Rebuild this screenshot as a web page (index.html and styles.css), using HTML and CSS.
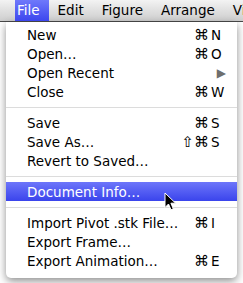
FILE: index.html
```html
<!DOCTYPE html>
<html lang="en">
<head>
  <meta charset="UTF-8">
  <title>File Menu</title>
  <link rel="stylesheet" href="styles.css">
</head>
<body>

  <div class="menubar">
    <span class="judul aktif">File</span>
    <span class="judul">Edit</span>
    <span class="judul">Figure</span>
    <span class="judul">Arrange</span>
    <span class="judul">View</span>
  </div>

  <div class="menu">
    <div class="item"><span class="label">New</span><span class="mods">⌘</span><span class="key">N</span></div>
    <div class="item"><span class="label">Open…</span><span class="mods">⌘</span><span class="key">O</span></div>
    <div class="item"><span class="label">Open Recent</span><span class="panah">▶</span></div>
    <div class="item"><span class="label">Close</span><span class="mods">⌘</span><span class="key">W</span></div>
    <div class="pemisah"></div>
    <div class="item"><span class="label">Save</span><span class="mods">⌘</span><span class="key">S</span></div>
    <div class="item"><span class="label">Save As…</span><span class="mods">⇧⌘</span><span class="key">S</span></div>
    <div class="item"><span class="label">Revert to Saved…</span></div>
    <div class="pemisah"></div>
    <div class="item pilih"><span class="label">Document Info…</span></div>
    <div class="pemisah"></div>
    <div class="item"><span class="label">Import Pivot .stk File…</span><span class="mods">⌘</span><span class="key">I</span></div>
    <div class="item"><span class="label">Export Frame…</span></div>
    <div class="item"><span class="label">Export Animation…</span><span class="mods">⌘</span><span class="key">E</span></div>
  </div>

  <svg class="kursor" width="13" height="19" viewBox="0 0 13 19">
    <path d="M1 1 L1 15.5 L4.5 12 L7 17.8 L9.3 16.8 L6.9 11.2 L11.6 11.2 Z" fill="#000" stroke="#fff" stroke-width="1" stroke-linejoin="round"/>
  </svg>

</body>
</html>
```

FILE: styles.css
```css
body {
  margin: 0;
  padding: 0;
  background: #fff;
  font-family: 'DejaVu Sans', sans-serif;
  font-size: 13.5px;
  color: #000;
  overflow: hidden;
  position: relative;
  height: 283px;
}

.menubar {
  height: 21px;
  line-height: 21px;
  background: linear-gradient(#f3f3f3, #dcdcdc 60%, #cfcfcf);
  border-bottom: 1px solid #4a4a4a;
  padding-left: 15px;
  display: flex;
  white-space: nowrap;
  overflow: hidden;
}

.judul {
  padding: 0 9px;
}

.judul.aktif {
  padding-left: 2px;
  color: #fff;
  background: linear-gradient(#6f79fb, #3c46ee);
}

.menu {
  width: 231px;
  margin-left: 6px;
  padding: 3px 0 8px;
  background: #fff;
  border-radius: 0 0 5px 5px;
  box-shadow: 0 3px 9px rgba(0,0,0,0.45);
}

.item {
  display: flex;
  align-items: center;
  height: 19px;
  padding: 0 11px 0 21px;
  white-space: nowrap;
}

.label {
  flex: 1;
}

.mods {
  text-align: right;
  margin-right: 2px;
  font-size: 15px;
}

.key {
  width: 15px;
}

.panah {
  font-size: 12px;
  color: #6e6e6e;
}

.item.pilih {
  color: #fff;
  background: linear-gradient(#6d76fa, #3a44ec);
}

.pemisah {
  height: 1px;
  background: #dcdcdc;
  margin: 6px 0 5px;
}

.kursor {
  position: absolute;
  left: 164px;
  top: 192px;
}
```
